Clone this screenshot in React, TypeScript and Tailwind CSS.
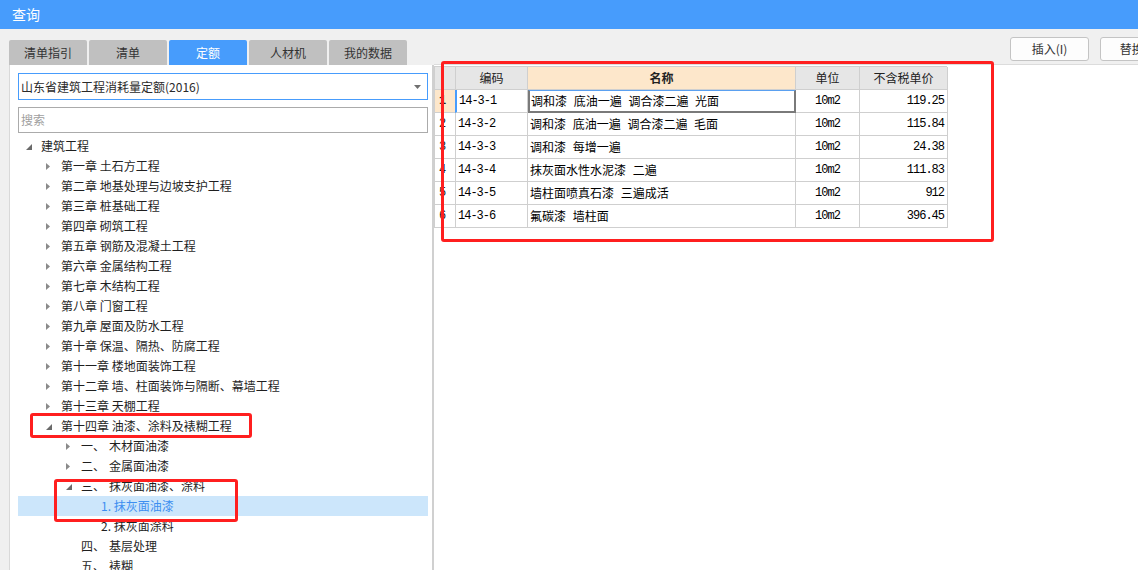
import React from "react";

const cjk = { fontFamily: '"Noto Sans CJK SC", "Noto Sans", sans-serif' };
const mono = { fontFamily: '"Liberation Mono", "Noto Sans CJK SC", monospace' };

type Node = { label: React.ReactNode; depth: number; state: "open" | "closed" | "leaf"; selected?: boolean };

const Num = ({ a, b }: { a: string; b: string }) => (
  <span className="flex">
    <span className="inline-block w-[28px]">{a}</span>
    <span>{b}</span>
  </span>
);

const nodes: Node[] = [
  { label: "建筑工程", depth: 0, state: "open" },
  { label: "第一章 土石方工程", depth: 1, state: "closed" },
  { label: "第二章 地基处理与边坡支护工程", depth: 1, state: "closed" },
  { label: "第三章 桩基础工程", depth: 1, state: "closed" },
  { label: "第四章 砌筑工程", depth: 1, state: "closed" },
  { label: "第五章 钢筋及混凝土工程", depth: 1, state: "closed" },
  { label: "第六章 金属结构工程", depth: 1, state: "closed" },
  { label: "第七章 木结构工程", depth: 1, state: "closed" },
  { label: "第八章 门窗工程", depth: 1, state: "closed" },
  { label: "第九章 屋面及防水工程", depth: 1, state: "closed" },
  { label: "第十章 保温、隔热、防腐工程", depth: 1, state: "closed" },
  { label: "第十一章 楼地面装饰工程", depth: 1, state: "closed" },
  { label: "第十二章 墙、柱面装饰与隔断、幕墙工程", depth: 1, state: "closed" },
  { label: "第十三章 天棚工程", depth: 1, state: "closed" },
  { label: "第十四章 油漆、涂料及裱糊工程", depth: 1, state: "open" },
  { label: <Num a="一、" b="木材面油漆" />, depth: 2, state: "closed" },
  { label: <Num a="二、" b="金属面油漆" />, depth: 2, state: "closed" },
  { label: <Num a="三、" b="抹灰面油漆、涂料" />, depth: 2, state: "open" },
  { label: "1. 抹灰面油漆", depth: 3, state: "leaf", selected: true },
  { label: "2. 抹灰面涂料", depth: 3, state: "leaf" },
  { label: <Num a="四、" b="基层处理" />, depth: 2, state: "leaf" },
  { label: <Num a="五、" b="裱糊" />, depth: 2, state: "leaf" },
];

const indent = ["pl-[8px]", "pl-[28px]", "pl-[48px]", "pl-[68px]"];

function Arrow({ state }: { state: Node["state"] }) {
  if (state === "closed")
    return (
      <svg width="4" height="7" viewBox="0 0 4 7" className="mt-[1px]">
        <path d="M0 0 L4 3.5 L0 7 Z" fill="#8a8a8a" />
      </svg>
    );
  if (state === "open")
    return (
      <svg width="6" height="6" viewBox="0 0 6 6" className="mt-[1px]">
        <path d="M6 0 L6 6 L0 6 Z" fill="#6a6a6a" />
      </svg>
    );
  return null;
}

const rows = [
  ["14-3-1", "调和漆 底油一遍 调合漆二遍 光面", "10m2", "119.25"],
  ["14-3-2", "调和漆 底油一遍 调合漆二遍 毛面", "10m2", "115.84"],
  ["14-3-3", "调和漆 每增一遍", "10m2", "24.38"],
  ["14-3-4", "抹灰面水性水泥漆 二遍", "10m2", "111.83"],
  ["14-3-5", "墙柱面喷真石漆 三遍成活", "10m2", "912"],
  ["14-3-6", "氟碳漆 墙柱面", "10m2", "396.45"],
];

const tabs = ["清单指引", "清单", "定额", "人材机", "我的数据"];

export default function App() {
  return (
    <div className="relative w-[1138px] h-[570px] overflow-hidden bg-[#f0f0f0] flex flex-col text-[12px] text-[#222]" style={cjk}>
      <div className="h-[29px] shrink-0 bg-[#479cfc] text-white text-[14px] pl-[12px] flex items-center">查询</div>
      <div className="flex flex-1 min-h-0">
        {/* left column */}
        <div className="w-[434px] shrink-0 pl-[9px] flex flex-col">
          <div className="h-[36px] shrink-0 flex items-end gap-[2px]">
            {tabs.map((t) => (
              <div
                key={t}
                className={
                  t === "定额"
                    ? "w-[78px] h-[25px] flex items-center justify-center rounded-t-[2px] bg-[#479cfc] text-white"
                    : "w-[78px] h-[25px] flex items-center justify-center rounded-t-[2px] bg-[#c0c0c0] text-[#333]"
                }
              >
                {t}
              </div>
            ))}
          </div>
          <div className="flex-1 min-h-0 bg-white border-l border-[#d9d9d9] border-r-2 border-r-[#d0d0d0] pt-[8px] overflow-hidden">
            <div className="ml-[8px] w-[410px] h-[27px] border border-[#479cfc] flex items-center justify-between pl-[2px] pr-[6px]">
              <span className="text-[#2a2a2a]">山东省建筑工程消耗量定额(2016)</span>
              <svg width="7" height="4" viewBox="0 0 7 4">
                <path d="M0 0 L7 0 L3.5 4 Z" fill="#707070" />
              </svg>
            </div>
            <div className="ml-[8px] mt-[7px] w-[410px] h-[26px] border border-[#ababab] flex items-center pl-[2px] text-[#a0a0a0]">
              搜索
            </div>
            <div className="ml-[8px] w-[410px] mt-[3px]">
              {nodes.map((n, i) => (
                <div
                  key={i}
                  className={
                    "h-[20px] flex items-center " +
                    indent[n.depth] +
                    (n.selected ? " bg-[#cce6fb] text-[#3d8ef0]" : " text-[#1f1f1f]")
                  }
                >
                  <span className="w-[15px] flex items-center">
                    <Arrow state={n.state} />
                  </span>
                  <span className="whitespace-pre">{n.label}</span>
                </div>
              ))}
            </div>
          </div>
        </div>
        {/* right column */}
        <div className="flex-1 flex flex-col min-w-0">
          <div className="h-[35px] shrink-0 flex items-start justify-end gap-[11px] pt-[8px] -mr-[41px]">
            <div className="w-[79px] h-[24px] bg-[#fdfdfd] border border-[#c4c4c4] rounded-[3px] flex items-center justify-center text-[#333]">
              插入(I)
            </div>
            <div className="w-[79px] h-[24px] bg-[#fdfdfd] border border-[#c4c4c4] rounded-[3px] flex items-center justify-center text-[#333]">
              替换(R)
            </div>
          </div>
          <div className="flex-1 bg-white border-t border-[#dcdcdc] pt-[1px]">
            <div className="grid grid-cols-[21px_72px_268px_64px_88px] w-[513px] border-l border-t border-[#cfcfcf]">
              <div className="h-[23px] bg-[#e6e6e6] border-r border-b border-[#cfcfcf]" />
              <div className="h-[23px] bg-[#e6e6e6] border-r border-b border-[#cfcfcf] flex items-center justify-center">编码</div>
              <div className="h-[23px] bg-[#fde7cb] border-r border-b border-[#cfcfcf] flex items-center justify-center font-bold">名称</div>
              <div className="h-[23px] bg-[#e6e6e6] border-r border-b border-[#cfcfcf] flex items-center justify-center">单位</div>
              <div className="h-[23px] bg-[#e6e6e6] border-r border-b border-[#cfcfcf] flex items-center justify-center">不含税单价</div>
              {rows.map((r, i) => (
                <React.Fragment key={i}>
                  <div
                    className={
                      "h-[23px] border-r border-b border-[#cfcfcf] flex items-center pl-[4px] overflow-hidden " +
                      (i === 0 ? "bg-[#fde7cb] font-bold" : "bg-white")
                    }
                    style={mono}
                  >
                    {i + 1}
                  </div>
                  <div
                    className={
                      "h-[23px] border-r border-b border-[#cfcfcf] flex items-center pl-[2px] text-[12px] tracking-[-1px] text-black " +
                      (i === 0 ? "border-l-2 border-l-[#479cfc] -ml-[1px]" : "")
                    }
                    style={mono}
                  >
                    {r[0]}
                  </div>
                  <div
                    className={
                      i === 0
                        ? "h-[23px] border-2 border-[#7a7a7a] border-t border-t-[#5aa0f0] flex items-center pl-[1px] text-black [word-spacing:4px]"
                        : "h-[23px] border-r border-b border-[#cfcfcf] flex items-center pl-[2px] text-black [word-spacing:4px]"
                    }
                  >
                    {r[1]}
                  </div>
                  <div
                    className="h-[23px] border-r border-b border-[#cfcfcf] flex items-center justify-center text-[12px] tracking-[-1px] text-black"
                    style={mono}
                  >
                    {r[2]}
                  </div>
                  <div
                    className="h-[23px] border-r border-b border-[#cfcfcf] flex items-center justify-end pr-[3px] text-[12px] tracking-[-1px] text-black"
                    style={mono}
                  >
                    {r[3]}
                  </div>
                </React.Fragment>
              ))}
            </div>
          </div>
        </div>
      </div>

      {/* red annotation boxes */}
      <div className="absolute left-[30px] top-[413px] w-[222px] h-[25px] border-[3px] border-[#ff1f1f] rounded-[3px]" />
      <div className="absolute left-[54px] top-[479px] w-[184px] h-[43px] border-[3px] border-[#ff1f1f] rounded-[3px]" />
      <div className="absolute left-[441px] top-[61px] w-[553px] h-[181px] border-[3px] border-[#ff1f1f] rounded-[3px]" />
    </div>
  );
}
